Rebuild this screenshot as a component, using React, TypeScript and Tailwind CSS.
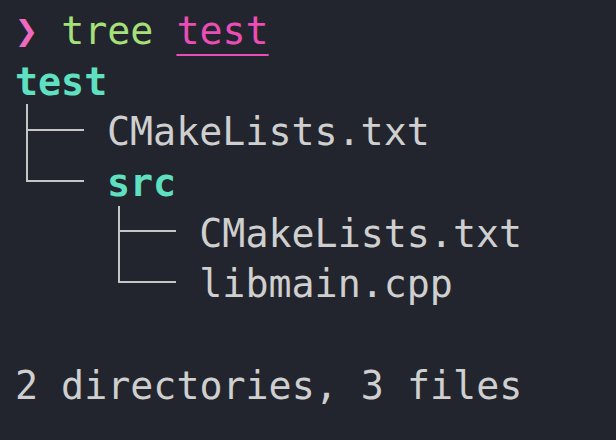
const line = "border-[#c6c6c6]";

function Tee() {
  return (
    <span className={`ml-[11px] w-[58px] h-full border-l-2 ${line} flex flex-col`}>
      <span className={`h-[26.5px] border-b-2 ${line}`} />
    </span>
  );
}

function Elbow() {
  return (
    <span className="ml-[11px] w-[58px] h-full flex flex-col">
      <span className={`h-[26.5px] border-l-2 border-b-2 ${line}`} />
    </span>
  );
}

function Row({ indent = 0, children }: { indent?: number; children: React.ReactNode }) {
  return (
    <div className="flex h-[50.7px] items-stretch" style={{ paddingLeft: indent * 92.3 }}>
      {children}
    </div>
  );
}

export default function App() {
  return (
    <div
      className="w-[616px] h-[440px] bg-[#22252d] text-[#cfcfcf] pl-[15px] pt-[3px] text-[38.3px] leading-[50.7px] overflow-hidden"
      style={{ fontFamily: '"DejaVu Sans Mono", monospace' }}
    >
      {/* prompt */}
      <Row>
        <span className="pt-[3px] whitespace-pre">
          <span className="text-[#ef6abf]">❯</span>{" "}
          <span className="text-[#a6e07a]">tree</span>{" "}
          <span className="text-[#ea4db5] underline decoration-2 underline-offset-[10px]">test</span>
        </span>
      </Row>

      {/* tree output */}
      <Row>
        <span className="pt-[3px] font-bold text-[#5fe1c1]">test</span>
      </Row>
      <Row>
        <Tee />
        <span className="pt-[3px] ml-[23px]">CMakeLists.txt</span>
      </Row>
      <Row>
        <Elbow />
        <span className="pt-[3px] ml-[23px] font-bold text-[#5fe1c1]">src</span>
      </Row>
      <Row indent={1}>
        <Tee />
        <span className="pt-[3px] ml-[23px]">CMakeLists.txt</span>
      </Row>
      <Row indent={1}>
        <Elbow />
        <span className="pt-[3px] ml-[23px]">libmain.cpp</span>
      </Row>
      <Row>
        <span>&nbsp;</span>
      </Row>
      <Row>
        <span className="pt-[3px] whitespace-pre">2 directories, 3 files</span>
      </Row>
    </div>
  );
}
